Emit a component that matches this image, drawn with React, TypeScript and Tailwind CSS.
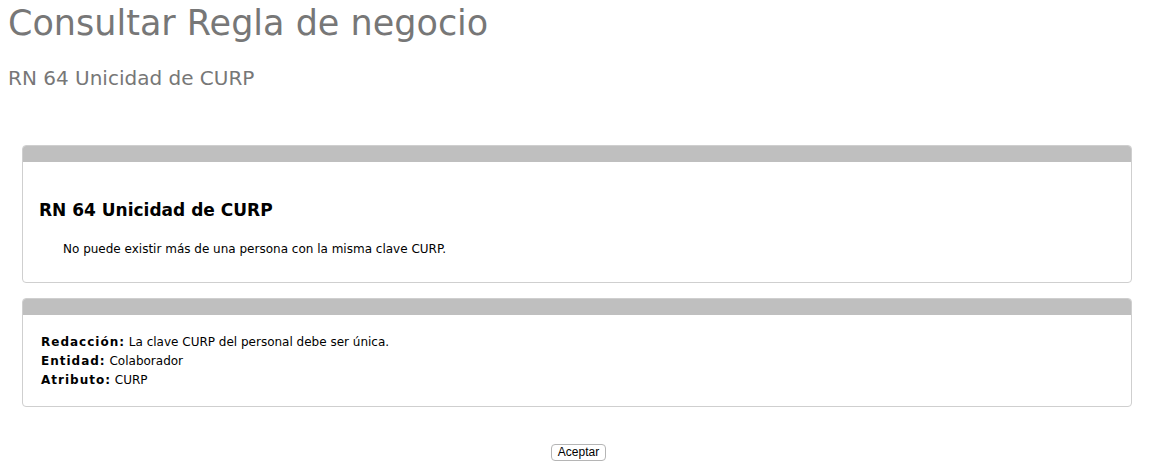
import React from 'react';

const Panel: React.FC<{ children: React.ReactNode; className?: string }> = ({ children, className }) => (
  <div className={`ml-[22px] mr-[25px] border border-[#cfcfcf] rounded-[4px] overflow-hidden ${className ?? ''}`}>
    <div className="h-[16px] bg-[#bfbfbf]" />
    {children}
  </div>
);

const App: React.FC = () => {
  return (
    <div className="min-h-[469px] bg-white font-['DejaVu_Sans',Verdana,sans-serif] text-black">
      <h1 className="px-2 pt-[1px] text-[35px] leading-[44px] text-[#777777]">Consultar Regla de negocio</h1>
      <h2 className="px-2 mt-[21px] text-[20px] leading-[24px] text-[#777777]">RN 64 Unicidad de CURP</h2>

      <Panel className="mt-[55px]">
        <div className="px-4 pt-[38px] pb-[25px]">
          <h3 className="text-[17px] leading-[20px] font-bold">RN 64 Unicidad de CURP</h3>
          <p className="mt-[21px] pl-6 text-[12px] leading-[16px]">
            No puede existir más de una persona con la misma clave CURP.
          </p>
        </div>
      </Panel>

      <Panel className="mt-[15px]">
        <div className="px-[18px] pt-[18px] pb-[16px] text-[12px] leading-[19px]">
          <div><span className="font-bold tracking-[1px]">Redacción:</span> La clave CURP del personal debe ser única.</div>
          <div><span className="font-bold tracking-[1px]">Entidad:</span> Colaborador</div>
          <div><span className="font-bold tracking-[1px]">Atributo:</span> CURP</div>
        </div>
      </Panel>

      <div className="flex justify-center mt-[37px]">
        <button className="h-[17px] px-[6px] text-[12px] leading-[15px] border border-[#b5b5b5] rounded-[4px] bg-white font-['Liberation_Sans',Arial,sans-serif]">
          Aceptar
        </button>
      </div>
    </div>
  );
};

export default App;
